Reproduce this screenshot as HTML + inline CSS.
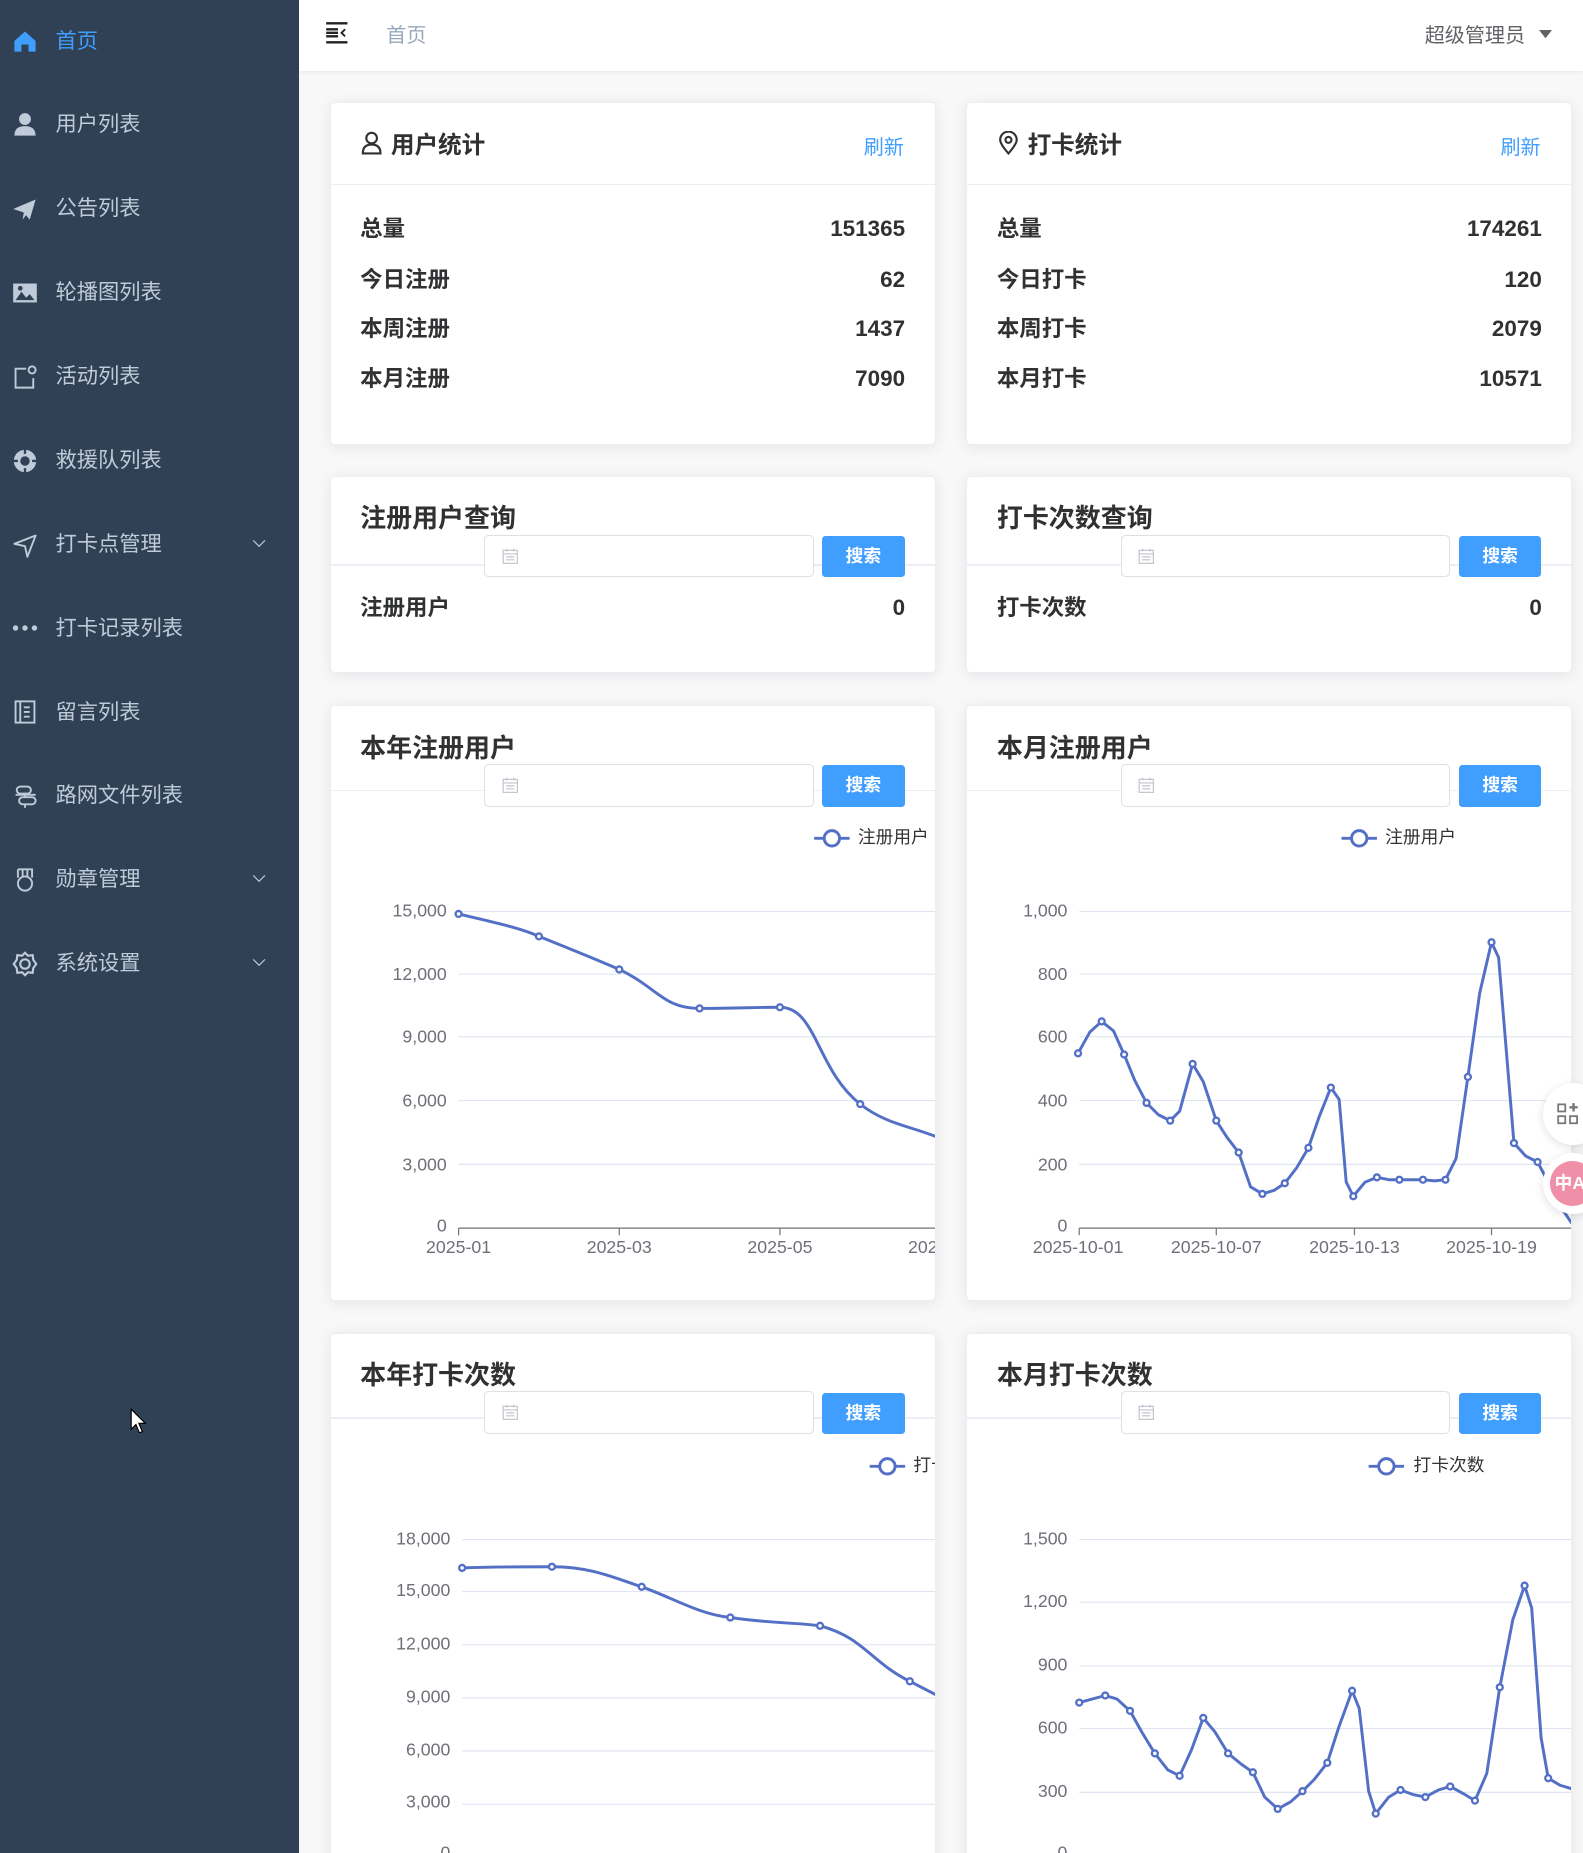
<!DOCTYPE html>
<html><head><meta charset="utf-8">
<style>
*{margin:0;padding:0;box-sizing:border-box}
html,body{width:1583px;height:1853px;overflow:hidden;background:#f8f8f9;font-family:"Liberation Sans","Noto Sans CJK SC",sans-serif}
#w{zoom:1.18134;width:1340px;height:1569px;position:relative;overflow:hidden}
.side{position:absolute;left:0;top:0;width:253px;height:1569px;background:#304156}
.mi{position:absolute;left:0;width:253px;height:30px;color:#bfcbd9;font-size:18px;line-height:30px}
.mi .t{position:absolute;left:47px;top:1px}
.mi svg{position:absolute;left:10px;top:5px}
.mi svg.ar{position:absolute;left:213px;top:10px;width:12px;height:10px}
.hd{position:absolute;left:253px;top:0;width:1087px;height:60px;background:#fff;box-shadow:0 1px 4px rgba(0,21,41,.08)}
.card{position:absolute;background:#fff;border:1px solid #ebeef5;border-radius:4px;box-shadow:0 2px 12px rgba(0,0,0,.08);overflow:hidden}
.ttl{position:absolute;left:25px;font-weight:bold;color:#303133}
.row{position:absolute;left:25px;right:25px;height:24px;font-size:19px;font-weight:bold;color:#303133;line-height:24px}
.row span{position:absolute;right:0}
.div{position:absolute;left:0;right:0;height:1px;background:#ebeef5}
.inp{position:absolute;left:130px;width:279px;height:36px;border:1px solid #dcdfe6;border-radius:4px;background:#fff}
.inp svg{position:absolute;left:14px;top:10px}
.btn{position:absolute;left:416px;width:70px;height:35px;background:#409eff;border-radius:3px;color:#fff;font-size:15px;font-weight:bold;text-align:center;line-height:35px}
.ref{position:absolute;right:26px;color:#409eff;font-size:17px}
svg text{font-family:"Liberation Sans","Noto Sans CJK SC",sans-serif}
</style></head><body><div id="w">

<div class="side">
 <div class="mi" style="top:19px;color:#409eff"><svg width="22" height="22" viewBox="0 0 22 22"><path d="M2 11 L11 3 L20 11 V20 H14 V14 H8 V20 H2Z" fill="#409eff"/></svg><span class="t">首页</span></div>
 <div class="mi" style="top:90px"><svg width="22" height="22" viewBox="0 0 22 22"><circle cx="11" cy="6" r="5" fill="#bfcbd9"/><path d="M2 20 Q2 12 11 12 Q20 12 20 20Z" fill="#bfcbd9"/></svg><span class="t">用户列表</span></div>
 <div class="mi" style="top:161px"><svg width="22" height="22" viewBox="0 0 22 22"><path d="M1 11 L20 3 L15 20 L10 14Z" fill="#bfcbd9"/><path d="M10 14 L9 20 L12 16" fill="#bfcbd9"/></svg><span class="t">公告列表</span></div>
 <div class="mi" style="top:232px"><svg width="22" height="22" viewBox="0 0 22 22"><rect x="1" y="3" width="20" height="16" fill="#bfcbd9"/><path d="M3 17 L8 10 L12 15 L15 12 L19 17Z" fill="#304156"/><circle cx="7" cy="7" r="2" fill="#304156"/></svg><span class="t">轮播图列表</span></div>
 <div class="mi" style="top:303px"><svg width="22" height="22" viewBox="0 0 22 22" fill="none" stroke="#bfcbd9" stroke-width="1.6"><path d="M12 4 H3 V20 H18 V12"/><circle cx="17" cy="5" r="3"/></svg><span class="t">活动列表</span></div>
 <div class="mi" style="top:374px"><svg width="22" height="22" viewBox="0 0 22 22"><circle cx="11" cy="11" r="9.5" fill="#bfcbd9"/><circle cx="11" cy="11" r="4" fill="#304156"/><path d="M11 1 V5 M11 17 V21 M1 11 H5 M17 11 H21" stroke="#304156" stroke-width="2"/></svg><span class="t">救援队列表</span></div>
 <div class="mi" style="top:445px"><svg width="22" height="22" viewBox="0 0 22 22" fill="none" stroke="#bfcbd9" stroke-width="1.6" stroke-linejoin="round"><path d="M2 10 L20 3 L13 21 L11 12Z"/></svg><span class="t">打卡点管理</span><svg class="ar" viewBox="0 0 12 10"><path d="M1 2 L6 7 L11 2" fill="none" stroke="#bfcbd9"/></svg></div>
 <div class="mi" style="top:516px"><svg width="22" height="22" viewBox="0 0 22 22" fill="#bfcbd9"><circle cx="3" cy="11" r="2.3"/><circle cx="11" cy="11" r="2.3"/><circle cx="19" cy="11" r="2.3"/></svg><span class="t">打卡记录列表</span></div>
 <div class="mi" style="top:587px"><svg width="22" height="22" viewBox="0 0 22 22" fill="none" stroke="#bfcbd9" stroke-width="1.6"><rect x="3" y="2" width="16" height="18"/><path d="M7 2 V20 M10 7 H15 M10 11 H15 M10 15 H15"/></svg><span class="t">留言列表</span></div>
 <div class="mi" style="top:658px"><svg width="22" height="22" viewBox="0 0 22 22" fill="none" stroke="#bfcbd9" stroke-width="1.6"><rect x="4" y="3" width="12" height="6" rx="3"/><rect x="6" y="12" width="14" height="6" rx="3"/><path d="M11 9 V12 M11 18 V21 M3 10 H20"/></svg><span class="t">路网文件列表</span></div>
 <div class="mi" style="top:729px"><svg width="22" height="22" viewBox="0 0 22 22" fill="none" stroke="#bfcbd9" stroke-width="1.6"><path d="M5 2 H17 V9 M5 2 V9 M9 2 V8 M13 2 V8"/><circle cx="11" cy="14" r="6"/></svg><span class="t">勋章管理</span><svg class="ar" viewBox="0 0 12 10"><path d="M1 2 L6 7 L11 2" fill="none" stroke="#bfcbd9"/></svg></div>
 <div class="mi" style="top:800px"><svg width="22" height="22" viewBox="0 0 22 22" fill="none" stroke="#bfcbd9" stroke-width="1.8"><circle cx="11" cy="11" r="4"/><path d="M11 1.5 L13.5 4 L17.5 3.5 L18 7.5 L20.5 11 L18 14.5 L17.5 18.5 L13.5 18 L11 20.5 L8.5 18 L4.5 18.5 L4 14.5 L1.5 11 L4 7.5 L4.5 3.5 L8.5 4Z"/></svg><span class="t">系统设置</span><svg class="ar" viewBox="0 0 12 10"><path d="M1 2 L6 7 L11 2" fill="none" stroke="#bfcbd9"/></svg></div>
 <svg style="position:absolute;left:110px;top:1192px" width="16" height="24" viewBox="0 0 16 24"><path d="M1 1 V18 L5 14 L8 21 L10.5 20 L7.5 13 L13 13Z" fill="#fff" stroke="#000" stroke-width="1"/></svg>
</div>

<div class="hd">
 <svg style="position:absolute;left:22px;top:18px" width="20" height="20" viewBox="0 0 20 20" fill="none" stroke="#222" stroke-width="2"><path d="M1 2 H19 M1 10 H11 M1 18 H19 M1 7 H11 M1 13 H11"/><path d="M17 7 L14 10 L17 13" stroke-width="1.6"/></svg>
 <div style="position:absolute;left:74px;top:16px;font-size:17px;color:#97a8be">首页</div>
 <div style="position:absolute;left:953px;top:16px;font-size:17px;color:#606266">超级管理员</div>
 <svg style="position:absolute;left:1050px;top:25px" width="12" height="8"><path d="M0 0 H11 L5.5 7Z" fill="#606266"/></svg>
</div>

<!-- Card 1 -->
<div class="card" style="left:279px;top:86px;width:513px;height:291px">
 <svg style="position:absolute;left:26px;top:24px" width="18" height="20" viewBox="0 0 18 20" fill="none" stroke="#303133" stroke-width="1.8"><circle cx="9" cy="6" r="4.5"/><path d="M1.5 19 Q1.5 11.5 9 11.5 Q16.5 11.5 16.5 19Z"/></svg>
 <div class="ttl" style="left:51px;top:20px;font-size:20px">用户统计</div>
 <div class="ref" style="top:24px">刷新</div>
 <div class="div" style="top:69px"></div>
 <div class="row" style="top:95px">总量<span>151365</span></div>
 <div class="row" style="top:138px">今日注册<span>62</span></div>
 <div class="row" style="top:180px">本周注册<span>1437</span></div>
 <div class="row" style="top:222px">本月注册<span>7090</span></div>
</div>
<div class="card" style="left:818px;top:86px;width:513px;height:291px">
 <svg style="position:absolute;left:27px;top:24px" width="16" height="20" viewBox="0 0 16 20" fill="none" stroke="#303133" stroke-width="1.8"><path d="M8 19 Q1 11 1 7.5 A7 7 0 0 1 15 7.5 Q15 11 8 19Z"/><circle cx="8" cy="7.5" r="2.5"/></svg>
 <div class="ttl" style="left:51px;top:20px;font-size:20px">打卡统计</div>
 <div class="ref" style="top:24px">刷新</div>
 <div class="div" style="top:69px"></div>
 <div class="row" style="top:95px">总量<span>174261</span></div>
 <div class="row" style="top:138px">今日打卡<span>120</span></div>
 <div class="row" style="top:180px">本周打卡<span>2079</span></div>
 <div class="row" style="top:222px">本月打卡<span>10571</span></div>
</div>

<!-- Card 2 -->
<div class="card" style="left:279px;top:403px;width:513px;height:167px">
 <div class="ttl" style="top:18px;font-size:22px">注册用户查询</div>
 <div class="div" style="top:74px"></div>
 <div class="inp" style="top:49px"><svg width="14" height="14" viewBox="0 0 14 14" fill="none" stroke="#c0c4cc"><rect x="1" y="2" width="12" height="11"/><path d="M1 5 H13 M4 0.5 V3 M10 0.5 V3 M3.5 7.5 H10.5 M3.5 10 H10.5"/></svg></div>
 <div class="btn" style="top:50px">搜索</div>
 <div class="row" style="top:99px">注册用户<span>0</span></div>
</div>
<div class="card" style="left:818px;top:403px;width:513px;height:167px">
 <div class="ttl" style="top:18px;font-size:22px">打卡次数查询</div>
 <div class="div" style="top:74px"></div>
 <div class="inp" style="top:49px"><svg width="14" height="14" viewBox="0 0 14 14" fill="none" stroke="#c0c4cc"><rect x="1" y="2" width="12" height="11"/><path d="M1 5 H13 M4 0.5 V3 M10 0.5 V3 M3.5 7.5 H10.5 M3.5 10 H10.5"/></svg></div>
 <div class="btn" style="top:50px">搜索</div>
 <div class="row" style="top:99px">打卡次数<span>0</span></div>
</div>

<!-- Card 3 left -->
<div class="card" style="left:279px;top:597px;width:513px;height:504px">
 <svg style="position:absolute;left:0;top:0" width="513" height="504"><g transform="translate(-279,-597)" font-size="15" fill="#6e7079">
  <g stroke="#e0e6f1"><path d="M387 771H800M387 824H800M387 877H800M387 931H800M387 985H800"/></g>
  <path d="M387 1039H800M387 1039V1045M523 1039V1045M659 1039V1045" stroke="#6e7079"/>
  <g text-anchor="end"><text x="377" y="775">15,000</text><text x="377" y="829">12,000</text><text x="377" y="882">9,000</text><text x="377" y="936">6,000</text><text x="377" y="990">3,000</text><text x="377" y="1042">0</text></g>
  <g text-anchor="middle"><text x="387" y="1060">2025-01</text><text x="523" y="1060">2025-03</text><text x="659" y="1060">2025-05</text><text x="795" y="1060">2025-07</text></g>
  <path d="M387 773 C420 781 440 785 455 792 C480 802 500 810 523 820 C555 835 560 853 591 853 C620 853 640 852 659 852 C690 852 690 905 727 934 C750 952 770 952 800 965" fill="none" stroke="#5470c6" stroke-width="2.5"/>
  <g fill="#fff" stroke="#5470c6" stroke-width="2"><circle cx="387" cy="773" r="2.5"/><circle cx="455" cy="792" r="2.5"/><circle cx="523" cy="820" r="2.5"/><circle cx="591" cy="853" r="2.5"/><circle cx="659" cy="852" r="2.5"/><circle cx="727" cy="934" r="2.5"/></g>
  <path d="M688 709H718" stroke="#5470c6" stroke-width="2.5"/><circle cx="703" cy="709" r="6.5" fill="#fff" stroke="#5470c6" stroke-width="2.5"/><text x="725" y="713" fill="#333" font-size="15">注册用户</text>
 </g></svg>
 <div class="ttl" style="top:18px;font-size:22px">本年注册用户</div>
 <div class="div" style="top:71px"></div>
 <div class="inp" style="top:49px"><svg width="14" height="14" viewBox="0 0 14 14" fill="none" stroke="#c0c4cc"><rect x="1" y="2" width="12" height="11"/><path d="M1 5 H13 M4 0.5 V3 M10 0.5 V3 M3.5 7.5 H10.5 M3.5 10 H10.5"/></svg></div>
 <div class="btn" style="top:50px">搜索</div>
</div>

<!-- Card 3 right -->
<div class="card" style="left:818px;top:597px;width:513px;height:504px">
 <svg style="position:absolute;left:0;top:0" width="513" height="504"><g transform="translate(-818,-597)" font-size="15" fill="#6e7079">
  <g stroke="#e0e6f1"><path d="M913 771H1340M913 824H1340M913 877H1340M913 931H1340M913 985H1340"/></g>
  <path d="M913 1039H1340M913 1039V1045M1029 1039V1045M1146 1039V1045M1262 1039V1045" stroke="#6e7079"/>
  <g text-anchor="end"><text x="903" y="775">1,000</text><text x="903" y="829">800</text><text x="903" y="882">600</text><text x="903" y="936">400</text><text x="903" y="990">200</text><text x="903" y="1042">0</text></g>
  <g text-anchor="middle"><text x="912" y="1060">2025-10-01</text><text x="1029" y="1060">2025-10-07</text><text x="1146" y="1060">2025-10-13</text><text x="1262" y="1060">2025-10-19</text></g>
  <polyline points="912,891 922,873 932,864 942,872 951,892 960,914 970,933 980,943 990,948 998,940 1009,900 1018,915 1029,948 1038,962 1048,975 1058,1004 1068,1010 1078,1007 1087,1001 1097,988 1107,971 1116,945 1126,920 1133,930 1139,1000 1145,1012 1155,1000 1165,996 1175,998 1184,998 1194,998 1204,998 1214,999 1223,998 1232,980 1242,911 1252,840 1262,797 1268,810 1281,967 1291,978 1301,983 1310,1000 1320,1020 1330,1035" fill="none" stroke="#5470c6" stroke-width="2.5" stroke-linejoin="round"/>
  <g fill="#fff" stroke="#5470c6" stroke-width="2"><circle cx="912" cy="891" r="2.5"/><circle cx="932" cy="864" r="2.5"/><circle cx="951" cy="892" r="2.5"/><circle cx="970" cy="933" r="2.5"/><circle cx="990" cy="948" r="2.5"/><circle cx="1009" cy="900" r="2.5"/><circle cx="1029" cy="948" r="2.5"/><circle cx="1048" cy="975" r="2.5"/><circle cx="1068" cy="1010" r="2.5"/><circle cx="1087" cy="1001" r="2.5"/><circle cx="1107" cy="971" r="2.5"/><circle cx="1126" cy="920" r="2.5"/><circle cx="1145" cy="1012" r="2.5"/><circle cx="1165" cy="996" r="2.5"/><circle cx="1184" cy="998" r="2.5"/><circle cx="1204" cy="998" r="2.5"/><circle cx="1223" cy="998" r="2.5"/><circle cx="1242" cy="911" r="2.5"/><circle cx="1262" cy="797" r="2.5"/><circle cx="1281" cy="967" r="2.5"/><circle cx="1301" cy="983" r="2.5"/><circle cx="1320" cy="1020" r="2.5"/></g>
  <path d="M1135 709H1165" stroke="#5470c6" stroke-width="2.5"/><circle cx="1150" cy="709" r="6.5" fill="#fff" stroke="#5470c6" stroke-width="2.5"/><text x="1172" y="713" fill="#333" font-size="15">注册用户</text>
 </g></svg>
 <div class="ttl" style="top:18px;font-size:22px">本月注册用户</div>
 <div class="div" style="top:71px"></div>
 <div class="inp" style="top:49px"><svg width="14" height="14" viewBox="0 0 14 14" fill="none" stroke="#c0c4cc"><rect x="1" y="2" width="12" height="11"/><path d="M1 5 H13 M4 0.5 V3 M10 0.5 V3 M3.5 7.5 H10.5 M3.5 10 H10.5"/></svg></div>
 <div class="btn" style="top:50px">搜索</div>
</div>

<!-- Card 4 left -->
<div class="card" style="left:279px;top:1128px;width:513px;height:460px">
 <svg style="position:absolute;left:0;top:0" width="513" height="460"><g transform="translate(-279,-1128)" font-size="15" fill="#6e7079">
  <g stroke="#e0e6f1"><path d="M390 1302H800M390 1346H800M390 1391H800M390 1436H800M390 1481H800M390 1526H800"/></g>
  <g text-anchor="end"><text x="380" y="1306">18,000</text><text x="380" y="1350">15,000</text><text x="380" y="1395">12,000</text><text x="380" y="1440">9,000</text><text x="380" y="1485">6,000</text><text x="380" y="1529">3,000</text><text x="380" y="1572">0</text></g>
  <path d="M390 1326 C420 1325 440 1325 466 1325 C500 1325 520 1335 542 1342 C570 1352 590 1365 617 1368 C650 1373 670 1372 693 1375 C730 1385 735 1405 769 1422 L800 1438" fill="none" stroke="#5470c6" stroke-width="2.5"/>
  <g fill="#fff" stroke="#5470c6" stroke-width="2"><circle cx="390" cy="1326" r="2.5"/><circle cx="466" cy="1325" r="2.5"/><circle cx="542" cy="1342" r="2.5"/><circle cx="617" cy="1368" r="2.5"/><circle cx="693" cy="1375" r="2.5"/><circle cx="769" cy="1422" r="2.5"/></g>
  <path d="M735 1240H765" stroke="#5470c6" stroke-width="2.5"/><circle cx="750" cy="1240" r="6.5" fill="#fff" stroke="#5470c6" stroke-width="2.5"/><text x="772" y="1244" fill="#333" font-size="15">打卡次数</text>
 </g></svg>
 <div class="ttl" style="top:18px;font-size:22px">本年打卡次数</div>
 <div class="div" style="top:71px"></div>
 <div class="inp" style="top:49px"><svg width="14" height="14" viewBox="0 0 14 14" fill="none" stroke="#c0c4cc"><rect x="1" y="2" width="12" height="11"/><path d="M1 5 H13 M4 0.5 V3 M10 0.5 V3 M3.5 7.5 H10.5 M3.5 10 H10.5"/></svg></div>
 <div class="btn" style="top:50px">搜索</div>
</div>

<!-- Card 4 right -->
<div class="card" style="left:818px;top:1128px;width:513px;height:460px">
 <svg style="position:absolute;left:0;top:0" width="513" height="460"><g transform="translate(-818,-1128)" font-size="15" fill="#6e7079">
  <g stroke="#e0e6f1"><path d="M913 1302H1340M913 1355H1340M913 1409H1340M913 1462H1340M913 1516H1340"/></g>
  <g text-anchor="end"><text x="903" y="1306">1,500</text><text x="903" y="1359">1,200</text><text x="903" y="1413">900</text><text x="903" y="1466">600</text><text x="903" y="1520">300</text><text x="903" y="1572">0</text></g>
  <polyline points="913,1440 935,1434 945,1437 956,1447 966,1465 977,1483 988,1497 998,1502 1008,1480 1018,1453 1028,1465 1039,1483 1050,1492 1060,1499 1070,1520 1081,1530 1092,1524 1102,1515 1112,1505 1123,1491 1133,1460 1144,1430 1150,1445 1158,1515 1164,1534 1175,1520 1185,1514 1196,1518 1206,1520 1217,1514 1227,1511 1238,1517 1248,1523 1258,1500 1269,1427 1280,1370 1290,1341 1296,1360 1304,1470 1310,1504 1320,1510 1330,1513" fill="none" stroke="#5470c6" stroke-width="2.5" stroke-linejoin="round"/>
  <g fill="#fff" stroke="#5470c6" stroke-width="2"><circle cx="913" cy="1440" r="2.5"/><circle cx="935" cy="1434" r="2.5"/><circle cx="956" cy="1447" r="2.5"/><circle cx="977" cy="1483" r="2.5"/><circle cx="998" cy="1502" r="2.5"/><circle cx="1018" cy="1453" r="2.5"/><circle cx="1039" cy="1483" r="2.5"/><circle cx="1060" cy="1499" r="2.5"/><circle cx="1081" cy="1530" r="2.5"/><circle cx="1102" cy="1515" r="2.5"/><circle cx="1123" cy="1491" r="2.5"/><circle cx="1144" cy="1430" r="2.5"/><circle cx="1164" cy="1534" r="2.5"/><circle cx="1185" cy="1514" r="2.5"/><circle cx="1206" cy="1520" r="2.5"/><circle cx="1227" cy="1511" r="2.5"/><circle cx="1248" cy="1523" r="2.5"/><circle cx="1269" cy="1427" r="2.5"/><circle cx="1290" cy="1341" r="2.5"/><circle cx="1310" cy="1504" r="2.5"/></g>
  <path d="M1158 1240H1188" stroke="#5470c6" stroke-width="2.5"/><circle cx="1173" cy="1240" r="6.5" fill="#fff" stroke="#5470c6" stroke-width="2.5"/><text x="1196" y="1244" fill="#333" font-size="15">打卡次数</text>
 </g></svg>
 <div class="ttl" style="top:18px;font-size:22px">本月打卡次数</div>
 <div class="div" style="top:71px"></div>
 <div class="inp" style="top:49px"><svg width="14" height="14" viewBox="0 0 14 14" fill="none" stroke="#c0c4cc"><rect x="1" y="2" width="12" height="11"/><path d="M1 5 H13 M4 0.5 V3 M10 0.5 V3 M3.5 7.5 H10.5 M3.5 10 H10.5"/></svg></div>
 <div class="btn" style="top:50px">搜索</div>
</div>

<!-- floating -->
<div style="position:absolute;left:1306px;top:917px;width:52px;height:52px;border-radius:50%;background:#fff;box-shadow:0 2px 8px rgba(0,0,0,.12)"></div>
<svg style="position:absolute;left:1318px;top:933px" width="22" height="20" viewBox="0 0 22 20" fill="none" stroke="#777" stroke-width="1.5"><rect x="1" y="2" width="6" height="6"/><rect x="1" y="12" width="6" height="6"/><rect x="11" y="12" width="6" height="6"/><path d="M14 1 V8 M10.5 4.5 H17.5" stroke-width="2"/></svg>
<div style="position:absolute;left:1306px;top:976px;width:52px;height:52px;border-radius:50%;background:#fff;box-shadow:0 2px 8px rgba(0,0,0,.12)"></div>
<div style="position:absolute;left:1312px;top:983px;width:38px;height:38px;border-radius:50%;background:#ef8fa8;color:#fff;font-size:15px;font-weight:bold;line-height:38px;padding-left:4px">中A</div>

</div></body></html>
